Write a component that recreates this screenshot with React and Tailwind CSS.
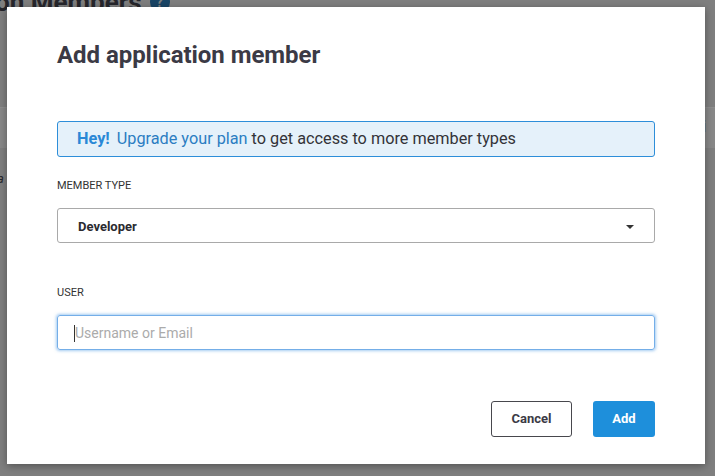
import React from "react";

// "Add application member" modal over a dimmed members page.
export default function App() {
  return (
    <div className="relative w-[715px] h-[476px] overflow-hidden bg-[#7f7f7f] font-['Roboto',sans-serif]">
      {/* dimmed page behind the modal */}
      <div className="absolute left-0 top-[-11px] flex items-center gap-2 text-[26px] font-bold text-[#26262c] leading-none whitespace-nowrap">
        <span className="-ml-[5px]">on Members</span>
        <span className="w-[20px] h-[20px] rounded-full bg-[#194566] text-[14px] text-[#7f7f7f] flex items-center justify-center">
          ?
        </span>
      </div>
      <div className="absolute left-0 right-0 top-[107px] h-[41px] bg-[#888888] border-t border-[#8e8e8e]" />
      <div className="absolute left-[697px] top-[119px] text-[16px] text-[#26262c] leading-none">ti</div>
      <div className="absolute left-[-3px] top-[172px] text-[13px] italic text-[#26262c] leading-none">a</div>

      {/* modal */}
      <div className="absolute left-[7px] top-[7px] w-[698px] h-[457px] bg-white shadow-[0_2px_8px_rgba(0,0,0,0.35)] px-[50px] pt-[34px]">
        <h1 className="text-[24px] leading-[28px] font-bold text-[#3b3a45] tracking-[-0.05px]">
          Add application member
        </h1>

        <div className="mt-[52px] h-[36px] rounded-[3px] border border-[#2d8ed9] bg-[#e5f1fa] px-[19px] flex items-center text-[16.25px] text-[#333338]">
          <span className="font-bold text-[#2a88d6]">Hey!</span>
          <span className="ml-[7px] text-[#2b7dc2]">Upgrade your plan</span>
          <span>&nbsp;to get access to more member types</span>
        </div>

        <div className="mt-[22px] text-[11px] leading-[14px] text-[#333] uppercase">Member type</div>
        <div className="mt-[15px] h-[35px] rounded-[3px] border border-[#a9a9a9] pl-[20px] pr-[20px] pt-[2px] flex items-center justify-between">
          <span className="text-[13px] font-bold text-[#2b2b30]">Developer</span>
          <span className="w-0 h-0 border-l-[4px] border-r-[4px] border-t-[4px] border-l-transparent border-r-transparent border-t-[#333]" />
        </div>

        <div className="mt-[43px] text-[11px] leading-[14px] text-[#333] uppercase">User</div>
        <div className="mt-[15px] h-[35px] rounded-[3px] border border-[#74aee8] shadow-[0_0_3px_1px_rgba(90,160,230,0.55)] pl-[16px] pt-[2px] flex items-center">
          <span className="w-px h-[17px] bg-[#333]" />
          <span className="text-[14px] text-[#ababab]">Username or Email</span>
        </div>

        <div className="mt-[51px] flex justify-end gap-[21px]">
          <button className="w-[81px] h-[36px] rounded-[3px] border border-[#47474d] bg-white text-[13px] font-bold text-[#3b3a45]">
            Cancel
          </button>
          <button className="w-[62px] h-[36px] rounded-[3px] bg-[#1e8fdb] text-[13px] font-bold text-white">
            Add
          </button>
        </div>
      </div>
    </div>
  );
}
